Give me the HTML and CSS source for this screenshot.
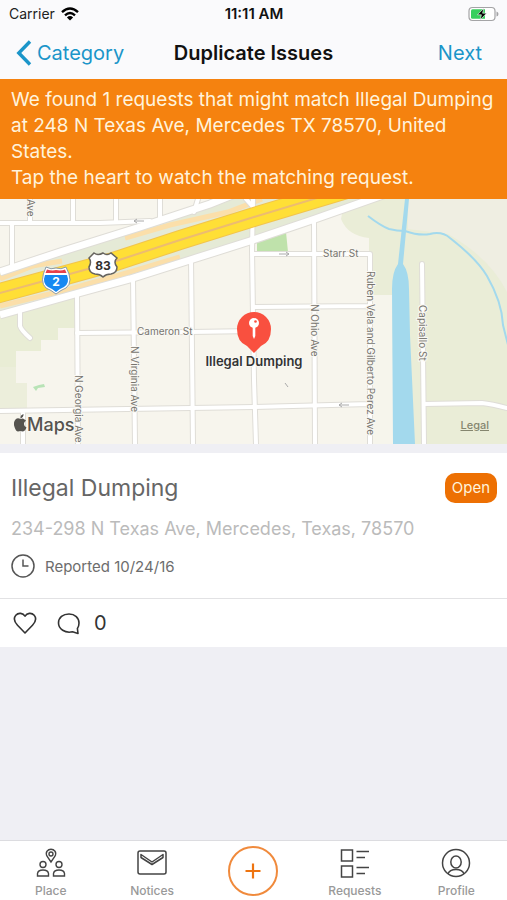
FILE: index.html
```
<!DOCTYPE html>
<html lang="en">
<head>
    <meta charset="UTF-8">
    <meta name="viewport" content="width=device-width, initial-scale=1.0">
    <title>Duplicate Issues</title>
    <link rel="stylesheet" href="styles.css">
</head>
<body>
    <div class="app">
        <header class="header">
            <div class="status-bar">
                <div class="carrier">
                    <span>Carrier</span>
                    <svg width="18" height="14" viewBox="0 0 18 14" fill="none" stroke="#000" stroke-width="2.4">
                        <path d="M1 5.2Q9-2.2 17 5.2"/>
                        <path d="M4 8.4Q9 3.8 14 8.4"/>
                        <path d="M9 13.5L5.9 10.4Q9 7.8 12.1 10.4Z" fill="#000" stroke="none"/>
                    </svg>
                </div>
                <div class="time">11:11 AM</div>
                <div class="battery">
                    <svg width="31" height="16" viewBox="0 0 31 16">
                        <rect x="1" y="1.5" width="26" height="13" rx="3.5" fill="#fff" stroke="#a4a4a6" stroke-width="1.2"/>
                        <path d="M28.5 5.5Q30.5 6 30.5 8T28.5 10.5Z" fill="#a4a4a6"/>
                        <path d="M4.5 3.3H17V12.7H4.5Q3 12.7 3 11.2V4.8Q3 3.3 4.5 3.3Z" fill="#38cf5e"/>
                        <path d="M15.8 2.2L9.5 8.8H13.4L12.2 13.8L18.6 7.2H14.6Z" fill="#000" stroke="#fff" stroke-width=".6"/>
                    </svg>
                </div>
            </div>
            <nav class="nav-bar">
                <button class="nav-button back">
                    <svg width="16" height="26" viewBox="0 0 16 26" fill="none" stroke="#1b95c9" stroke-width="3.4">
                        <path d="M14 1.5L2.8 13L14 24.5"/>
                    </svg>
                    Category
                </button>
                <h1>Duplicate Issues</h1>
                <button class="nav-button next">Next</button>
            </nav>
        </header>

        <div class="banner">
            <p>We found 1 requests that might match Illegal Dumping at 248 N Texas Ave, Mercedes TX 78570, United States.</p>
            <p>Tap the heart to watch the matching request.</p>
        </div>

        <div class="map">
            <svg class="map-drawing" viewBox="0 199 507 245" preserveAspectRatio="xMidYMid slice">
                <defs>
                    <g id="streets">
                        <path d="M0 223L100 223L150 221M12 223V268M30 199V221M73 199V222M116 199V222M160 199V220M198 199L194 212M246 199L254 208"/>
                        <path d="M20 312V326Q21 330 30 338M77 294L78 444M133 278L135 444M191 259L193 444M253 199L252 250L254 380L256 444M314 221L315 444"/>
                        <path d="M77 333L191 332L254 331M254 254H370V444M254 307L370 306M0 411L254 407L370 404M23 411V444"/>
                        <path d="M422 264L424 444M424 404L482 403Q492 404 507 408"/>
                    </g>
                    <g id="frontage">
                        <path d="M0 272L60 252L140 227L210 204L240 192"/>
                        <path d="M0 315L75 294L130 279L190 260L250 241L315 219L400 189"/>
                    </g>
                </defs>
                <rect y="199" width="507" height="245" fill="#f7f5ed"/>
                <path d="M345 199H507V444H390V295H369V238Q348 236 341 219Z" fill="#eaedd7"/>
                <path d="M408 199H507V292Q490 258 448 234L408 229Z" fill="#efeee2"/>
                <path d="M370 295H392L394 444H370Z" fill="#f6f5ec"/>
                <path d="M0 317L75 297V328H58V340H41V351H16V367H0Z" fill="#e9edd5"/>
                <path d="M0 367H16V383H27V408H0Z" fill="#eceedb"/>
                <path d="M0 274L240 194H390L250 239L130 277L0 313Z" fill="#e5ead6"/>
                <path d="M257 241L286 232L288 252H257Z" fill="#bfe2ab"/>
                <path d="M33 387L39 385L44 384L45 387L38 388L36 391Z" fill="#b8e3b6"/>

                <!-- highway ramps -->
                <g fill="none" stroke="#fbdfaa" stroke-width="5">
                    <path d="M0 278L32 266L62 261M0 306L70 289L130 272L180 257"/>
                    <path d="M125 238L170 225L228 212L262 199M0 279L38 264"/>
                </g>

                <use href="#streets" fill="none" stroke="#dfddd7" stroke-width="6" stroke-linecap="round" stroke-linejoin="round"/>
                <use href="#frontage" fill="none" stroke="#dfddd7" stroke-width="9"/>
                <use href="#streets" fill="none" stroke="#fff" stroke-width="4" stroke-linecap="round" stroke-linejoin="round"/>
                <use href="#frontage" fill="none" stroke="#fff" stroke-width="7"/>

                <!-- highway -->
                <path d="M-4 294L55 278L110 263L180 240L254 217L380 179" fill="none" stroke="#f2c44c" stroke-width="20"/>
                <path d="M-4 294L55 278L110 263L180 240L254 217L380 179" fill="none" stroke="#ffdf36" stroke-width="18"/>
                <path d="M-4 294L55 278L110 263L180 240L254 217L380 179" fill="none" stroke="#edbc70" stroke-width="2"/>

                <!-- canal and creek -->
                <path d="M405 199H409L403 264Q409 272 409 289L410 335L415 444H393L392 289Q392 272 398 264Z" fill="#a3d9ed"/>
                <path d="M368 216Q381 226 389 229Q397 231 405 231Q419 236 430 234Q442 231 450 238Q477 259 487 276Q502 302 503 325L508 345" fill="none" stroke="#a3d9ed" stroke-width="2"/>

                <!-- one way arrows -->
                <g fill="none" stroke="#aaa" stroke-width="1">
                    <path d="M144 221H134M137 219L134 221L137 223M279 254H289M286 252L289 254L286 256M349 405H339M342 403L339 405L342 407"/>
                    <path d="M285 383L288 387"/>
                </g>

                <g class="street-label">
                    <text x="137" y="335">Cameron St</text>
                    <text x="323" y="257">Starr St</text>
                    <text transform="translate(27 199) rotate(90)">Ave</text>
                    <text transform="translate(75 375) rotate(90)">N Georgia Ave</text>
                    <text transform="translate(131 346) rotate(90)">N Virginia Ave</text>
                    <text transform="translate(311 304) rotate(90)">N Ohio Ave</text>
                    <text transform="translate(367 271) rotate(90)">Ruben Vela and Gilberto Perez Ave</text>
                    <text transform="translate(419 305) rotate(90)">Capisallo St</text>
                </g>

                <!-- US 83 shield -->
                <path d="M94 253Q98 256 103 253Q107 256 111 253L117 258Q113 262 117 267Q117 273 111 274Q106 274 103 277Q100 274 95 274Q89 273 89 267Q92 262 89 258Z" fill="#fff" stroke="#66635e" stroke-width="1.5"/>
                <text class="shield-dark" x="103" y="270">83</text>

                <!-- Interstate 2 shield -->
                <path d="M46 267Q51 270 56 268Q61 270 66 267Q74 282 66 288Q61 290 56 294Q51 290 46 288Q39 282 46 267Z" fill="#fff" stroke="#8b9ba9"/>
                <path d="M47 269.5Q52 271 56 270Q61 271 65 269.5L66.5 273H45.5Z" fill="#e8404b"/>
                <path d="M45 275H67Q70 283 64 287Q60 288.5 56 292Q52 288.5 48 287Q42 283 45 275Z" fill="#1688f2"/>
                <text class="shield-light" x="56" y="286">2</text>

                <!-- pin -->
                <path d="M254 353L247 346Q237 342 237 329A17 17 0 0 1 271 329Q271 342 261 346Z" fill="#f9503f"/>
                <circle cx="254" cy="323" r="5" fill="#fff"/>
                <path d="M252.7 326H255.3V336L254 339L252.7 336Z" fill="#fff"/>
                <circle cx="255.5" cy="321.5" r="1.3" fill="#f9503f"/>
                <text class="pin-label" x="254" y="366">Illegal Dumping</text>

                <!-- map provider mark -->
                <path d="M24.5 419.5Q23 417.8 20.5 419Q17.500 417.500 15.500 419.500Q13 422 14.500 427Q16 431.500 18 431.500Q20.500 430.500 22.500 431.500Q25 431.500 26.500 427.500Q24 426.500 24 424Q24 421.800 26 420.800Q25.500 420 24.500 419.500ZM20.500 418.300Q20.300 415 23.500 414Q23.800 417.500 20.500 418.300Z" fill="#55534f"/>
                <text class="map-mark" x="27" y="431">Maps</text>
            </svg>
            <a class="legal" href="#legal">Legal</a>
        </div>

        <main class="results">
            <article class="request">
                <div class="request-body">
                    <div class="request-top">
                        <h2>Illegal Dumping</h2>
                        <span class="badge">Open</span>
                    </div>
                    <p class="address">234-298 N Texas Ave, Mercedes, Texas, 78570</p>
                    <div class="reported">
                        <svg width="24" height="24" viewBox="0 0 24 24" fill="none" stroke="#555" stroke-width="1.5">
                            <circle cx="12" cy="12" r="11"/>
                            <path d="M12 5.5V12H17.5"/>
                        </svg>
                        <span>Reported 10/24/16</span>
                    </div>
                </div>
                <div class="request-actions">
                    <button class="icon-button" aria-label="Watch">
                        <svg width="24" height="24" viewBox="0 0 24 24" fill="none" stroke="#333" stroke-width="1.6" stroke-linejoin="round">
                            <path d="M12 22L4.5 14.2C1 10.5 .6 7 2.8 4.3C5.5 1.2 10 2 12 5.2C14 2 18.5 1.2 21.2 4.3C23.4 7 23 10.5 19.5 14.2Z"/>
                        </svg>
                    </button>
                    <button class="icon-button">
                        <svg width="24" height="24" viewBox="0 0 24 24" fill="none" stroke="#333" stroke-width="1.6" stroke-linejoin="round">
                            <path d="M21 22.5L15.5 20.8C8 22.5 1.5 18 1.5 12C1.5 6.5 6 3 12 3S22 6.800 22 12C22 14.2 21.4 16.2 20.4 17.5Z"/>
                        </svg>
                        <span>0</span>
                    </button>
                </div>
            </article>
        </main>

        <nav class="tab-bar">
            <a class="tab" href="#place">
                <svg width="30" height="30" viewBox="0 0 30 30" fill="none" stroke="#444" stroke-width="1.4">
                    <path d="M15 14L11.2 8.5Q9.5 5.5 11 3.2Q12.5 1.3 15 1.3T19 3.2Q20.5 5.5 18.8 8.5Z"/>
                    <circle cx="15" cy="6" r="2"/>
                    <circle cx="7" cy="16.5" r="3"/>
                    <circle cx="23" cy="16.5" r="3"/>
                    <path d="M1.5 28V25.5Q2 22 7 22T12.5 25.5V28ZM17.5 28V25.5Q18 22 23 22T28.5 25.5V28Z"/>
                </svg>
                <span>Place</span>
            </a>
            <a class="tab" href="#notices">
                <svg width="30" height="30" viewBox="0 0 30 30" fill="none" stroke="#444" stroke-width="1.5" stroke-linejoin="round">
                    <rect x="1" y="3" width="28" height="23" rx="2"/>
                    <path d="M4 6.5V9.5L15 16.5L26 9.5V6.5L15 14Z"/>
                </svg>
                <span>Notices</span>
            </a>
            <a class="add-tab" href="#new" aria-label="New request">
                <svg width="16" height="16" viewBox="0 0 16 16" stroke="#ee7410" stroke-width="2.2">
                    <path d="M8 .5V15.5M.5 8H15.5"/>
                </svg>
            </a>
            <a class="tab" href="#requests">
                <svg width="30" height="30" viewBox="0 0 30 30" fill="none" stroke="#444" stroke-width="1.5">
                    <rect x="1.5" y="2" width="11" height="11"/>
                    <rect x="1.5" y="18" width="11" height="11"/>
                    <path d="M16.5 3.5H29M16.5 9.5H25M16.5 19.5H29M16.5 25.5H25"/>
                </svg>
                <span>Requests</span>
            </a>
            <a class="tab" href="#profile">
                <svg width="30" height="30" viewBox="0 0 30 30" fill="none" stroke="#444" stroke-width="1.5">
                    <circle cx="15" cy="15" r="13.5"/>
                    <ellipse cx="15" cy="14" rx="5.2" ry="6"/>
                    <path d="M7 26Q8.5 21.5 15 21.5T23 26"/>
                </svg>
                <span>Profile</span>
            </a>
        </nav>
    </div>
</body>
</html>
```
FILE: styles.css
```
* {
    box-sizing: border-box;
}

body {
    margin: 0;
    background-color: #efeff4;
    font-family: Inter, "Liberation Sans", sans-serif;
}

h1, h2, p {
    margin: 0;
}

a {
    text-decoration: none;
}

button {
    padding: 0;
    border: none;
    background: none;
    font-family: inherit;
    cursor: pointer;
}

svg {
    display: block;
}

.app {
    display: flex;
    flex-direction: column;
    min-height: 100vh;
}

/* header */
.header {
    background-color: #fafafc;
}

.status-bar {
    display: grid;
    grid-template-columns: 1fr auto 1fr;
    align-items: center;
    height: 26px;
    padding: 1px 8px 0 9px;
    font-size: 14px;
    color: #222;
}

.carrier {
    display: flex;
    align-items: center;
    gap: 6px;
}

.time {
    font-size: 15px;
    font-weight: 600;
    color: #111;
}

.battery {
    justify-self: end;
}

.nav-bar {
    display: grid;
    grid-template-columns: 1fr auto 1fr;
    align-items: center;
    height: 53px;
    padding: 0 16px;
}

.nav-bar h1 {
    font-size: 20px;
    font-weight: 600;
    color: #111;
}

.nav-button {
    font-size: 20px;
    color: #1b95c9;
}

.back {
    display: flex;
    align-items: center;
    gap: 5px;
}

.next {
    justify-self: end;
    padding-right: 9px;
}

.banner {
    padding: 8px 11px;
    background-color: #f5820f;
    color: #fff3dc;
    font-size: 19px;
    line-height: 26px;
}

/* map */
.map {
    position: relative;
}

.map-drawing {
    width: 100%;
    height: auto;
}

.map-drawing text {
    paint-order: stroke;
    stroke: #f9f8f3;
    stroke-width: 2px;
}

.street-label {
    font-size: 10px;
    fill: #77756f;
}

.map-drawing .pin-label {
    font-size: 13px;
    font-weight: 600;
    fill: #333;
    text-anchor: middle;
}

.map-drawing .shield-dark,
.map-drawing .shield-light {
    font-size: 12px;
    font-weight: 700;
    text-anchor: middle;
    stroke: none;
}

.shield-dark {
    fill: #33312e;
}

.shield-light {
    fill: #fff;
}

.map-mark {
    font-size: 18px;
    font-weight: 500;
    fill: #55534f;
}

.legal {
    position: absolute;
    right: 18px;
    bottom: 12px;
    font-size: 11px;
    font-weight: 500;
    color: #85866f;
    text-decoration: underline;
}

/* request card */
.results {
    flex: 1;
    padding-top: 9px;
}

.request {
    background-color: #fff;
}

.request-body {
    padding: 19px 10px 20px 11px;
    border-bottom: 1px solid #e2e2e4;
}

.request-top {
    display: flex;
    align-items: center;
    justify-content: space-between;
}

.request-top h2 {
    font-size: 23px;
    font-weight: 400;
    line-height: 32px;
    color: #666;
}

.badge {
    padding: 0 7px;
    border-radius: 10px;
    background-color: #ed7003;
    color: #fff3dc;
    font-size: 15px;
    line-height: 30px;
}

.address {
    margin-top: 13px;
    font-size: 18px;
    line-height: 24px;
    color: #bbb;
}

.reported {
    display: flex;
    align-items: center;
    gap: 10px;
    margin-top: 13px;
    font-size: 15px;
    color: #6d6d6d;
}

.request-actions {
    display: flex;
    align-items: center;
    gap: 20px;
    height: 48px;
    padding: 0 13px;
}

.icon-button {
    display: flex;
    align-items: center;
    gap: 13px;
    font-size: 20px;
    color: #333;
}

/* tab bar */
.tab-bar {
    display: grid;
    grid-template-columns: repeat(5, 1fr);
    height: 60px;
    border-top: 1px solid #dcdce0;
    background-color: #fff;
}

.tab {
    display: flex;
    flex-direction: column;
    align-items: center;
    gap: 5px;
    padding-top: 7px;
    font-size: 12px;
    font-weight: 500;
    color: #999;
}

.add-tab {
    display: flex;
    align-items: center;
    justify-content: center;
    justify-self: center;
    align-self: center;
    width: 50px;
    height: 50px;
    border: 2px solid #f08a3c;
    border-radius: 50%;
}
```
